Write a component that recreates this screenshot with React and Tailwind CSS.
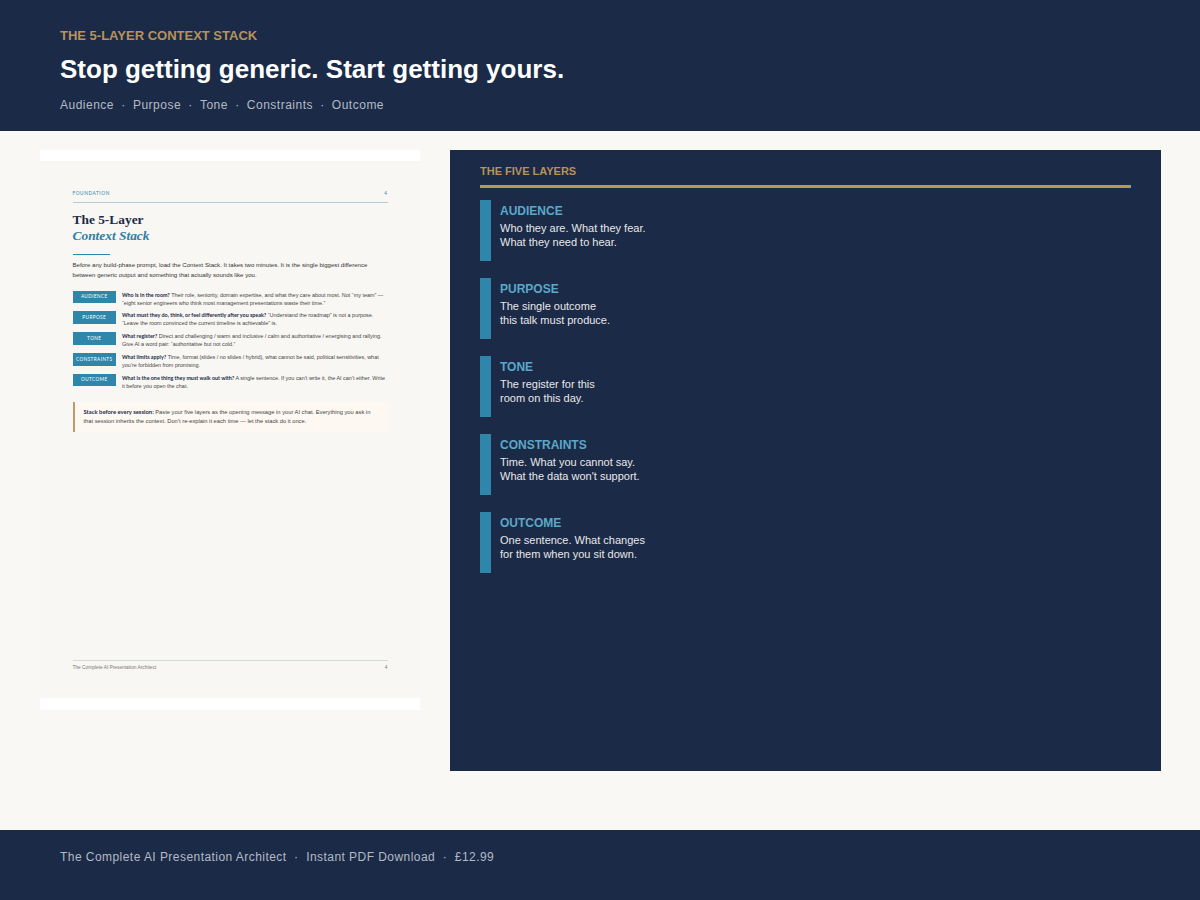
const layers = [
  ["AUDIENCE", "Who they are. What they fear.", "What they need to hear."],
  ["PURPOSE", "The single outcome", "this talk must produce."],
  ["TONE", "The register for this", "room on this day."],
  ["CONSTRAINTS", "Time. What you cannot say.", "What the data won't support."],
  ["OUTCOME", "One sentence. What changes", "for them when you sit down."],
];

const rows = [
  ["AUDIENCE", "Who is in the room?", " Their role, seniority, domain expertise, and what they care about most. Not “my team” —", "“eight senior engineers who think most management presentations waste their time.”"],
  ["PURPOSE", "What must they do, think, or feel differently after you speak?", " “Understand the roadmap” is not a purpose.", "“Leave the room convinced the current timeline is achievable” is."],
  ["TONE", "What register?", " Direct and challenging / warm and inclusive / calm and authoritative / energising and rallying.", "Give AI a word pair: “authoritative but not cold.”"],
  ["CONSTRAINTS", "What limits apply?", " Time, format (slides / no slides / hybrid), what cannot be said, political sensitivities, what", "you’re forbidden from promising."],
  ["OUTCOME", "What is the one thing they must walk out with?", " A single sentence. If you can’t write it, the AI can’t either. Write", "it before you open the chat."],
];

const topics = ["Audience", "Purpose", "Tone", "Constraints", "Outcome"];

export default function App() {
  return (
    <div className="flex h-[900px] flex-col bg-[#faf8f5] font-['Liberation_Sans',sans-serif]">
      <header className="flex h-[131px] flex-col bg-[#1b2a47] pl-[60px] pt-[28px]">
        <div className="text-[13px] leading-[16px] font-bold text-[#b8925a]">THE 5-LAYER CONTEXT STACK</div>
        <h1 className="mt-[10px] text-[26px] leading-[30px] font-bold text-white">Stop getting generic. Start getting yours.</h1>
        <div className="mt-[13px] flex text-[12px] leading-[16px] tracking-[0.5px] text-[#b4bac4] whitespace-pre">
          {topics.map((t, i) => (
            <span key={t}>
              {i > 0 && <span className="tracking-[0.3px]">  ·  </span>}
              {t}
            </span>
          ))}
        </div>
      </header>

      <main className="flex flex-1 items-start pl-[40px] pt-[19px]">
        <div className="flex h-[560px] w-[380px] flex-col bg-white pt-[11px] pb-[12px]">
          <div className="flex flex-1 flex-col bg-[#f9f7f4] px-[32.5px] pt-[28px]">
            <div className="flex justify-between border-b-[1.5px] border-[#b4cdd4] pb-[3.5px] font-['Lato',sans-serif] text-[4.8px] leading-[9px] tracking-[0.55px] text-[#2e86ab]">
              <span>FOUNDATION</span>
              <span>4</span>
            </div>
            <div className="mt-[9.5px] font-['Liberation_Serif',serif] text-[13.4px] leading-[16px] font-bold text-[#1b2a47]">The 5-Layer</div>
            <div className="font-['Liberation_Serif',serif] text-[13.4px] leading-[16px] font-bold italic text-[#2e7ea3]">Context Stack</div>
            <div className="mt-[10px] h-[1px] w-[37px] bg-[#2e86ab]" />
            <p className="mt-[5px] text-[6.08px] leading-[9.6px] text-[#333333]">
              Before any build-phase prompt, load the Context Stack. It takes two minutes. It is the single biggest difference<br />
              between generic output and something that actually sounds like you.
            </p>
            <div className="mt-[11.4px] flex flex-col gap-[4.75px]">
              {rows.map(([label, bold, a, b]) => (
                <div key={label} className="flex h-[16px] items-start">
                  <div className="flex h-[12.7px] w-[43.5px] shrink-0 items-center justify-center bg-[#2e86ab] font-['Lato',sans-serif] text-[4.7px] tracking-[0.4px] text-white">{label}</div>
                  <div className="ml-[6px] whitespace-nowrap text-[5.45px] leading-[8px] text-[#444444]">
                    <div><b className="font-['Lato',sans-serif] text-[5.37px] font-bold text-[#1b2a47]">{bold}</b>{a}</div>
                    <div>{b}</div>
                  </div>
                </div>
              ))}
            </div>
            <div className="mt-[12.5px] h-[30px] border-l-2 border-[#c09a66] bg-[#fdf8f2] pl-[9px] pt-[5px] whitespace-nowrap text-[5.75px] leading-[9px] text-[#444444]">
              <div><b className="font-['Lato',sans-serif] text-[5.85px] font-bold text-[#1b2a47]">Stack before every session:</b> Paste your five layers as the opening message in your AI chat. Everything you ask in</div>
              <div>that session inherits the context. Don’t re-explain it each time — let the stack do it once.</div>
            </div>
            <div className="mt-auto mb-[27.5px] flex justify-between border-t border-[#d4dcda] pt-[2.5px] text-[4.8px] leading-[7px] text-[#777777]">
              <span>The Complete AI Presentation Architect</span>
              <span>4</span>
            </div>
          </div>
        </div>

        <section className="ml-[30px] h-[621px] w-[711px] bg-[#1b2a47] px-[30px] pt-[14px]">
          <div className="text-[11px] leading-[14px] font-bold text-[#b8925a]">THE FIVE LAYERS</div>
          <div className="mt-[7px] h-[3px] bg-[#b8965a]" />
          <div className="mt-[12px] flex flex-col gap-[17px]">
            {layers.map(([t, a, b]) => (
              <div key={t} className="flex h-[61px]">
                <div className="w-[11px] bg-[#2e86ab]" />
                <div className="ml-[9px] pt-[4px]">
                  <div className="text-[12px] leading-[14px] font-bold text-[#5ba8c8]">{t}</div>
                  <div className="mt-[3px] text-[11px] leading-[14px] text-[#e8e8e8]">{a}<br />{b}</div>
                </div>
              </div>
            ))}
          </div>
        </section>
      </main>

      <footer className="h-[70px] bg-[#1b2a47] pl-[60px] pt-[20px] text-[12px] leading-[14px] tracking-[0.45px] whitespace-pre text-[#b4bac4]">
        The Complete AI Presentation Architect  ·  Instant PDF Download  ·  £12.99
      </footer>
    </div>
  );
}
